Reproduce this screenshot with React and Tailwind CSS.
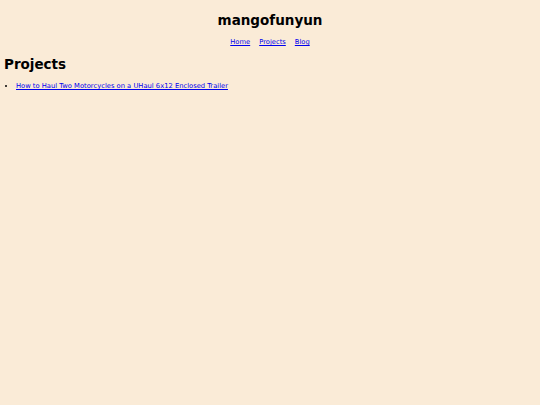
export default function App() {
  return (
    <div className="min-h-[405px] bg-[#faebd7] text-black" style={{ fontFamily: '"DejaVu Sans", Verdana, sans-serif' }}>
      <header className="flex flex-col items-center pt-[10px]">
        <h1 className="text-[13.5px] font-bold leading-[20px]">mangofunyun</h1>
        <nav className="mt-[7px] flex gap-[9px] text-[6.75px] leading-[10px]">
          <a href="#" className="text-[#0000ee] underline">Home</a>
          <a href="#" className="text-[#0000ee] underline">Projects</a>
          <a href="#" className="text-[#0000ee] underline">Blog</a>
        </nav>
      </header>
      <main className="px-[4px]">
        <h2 className="mt-[7px] text-[13.5px] font-bold leading-[20px]">Projects</h2>
        <ul className="mt-[7px] list-disc pl-[12px] text-[6.75px] leading-[10px]">
          <li><a href="#" className="text-[#0000ee] underline">How to Haul Two Motorcycles on a UHaul 6x12 Enclosed Trailer</a></li>
        </ul>
      </main>
    </div>
  );
}
